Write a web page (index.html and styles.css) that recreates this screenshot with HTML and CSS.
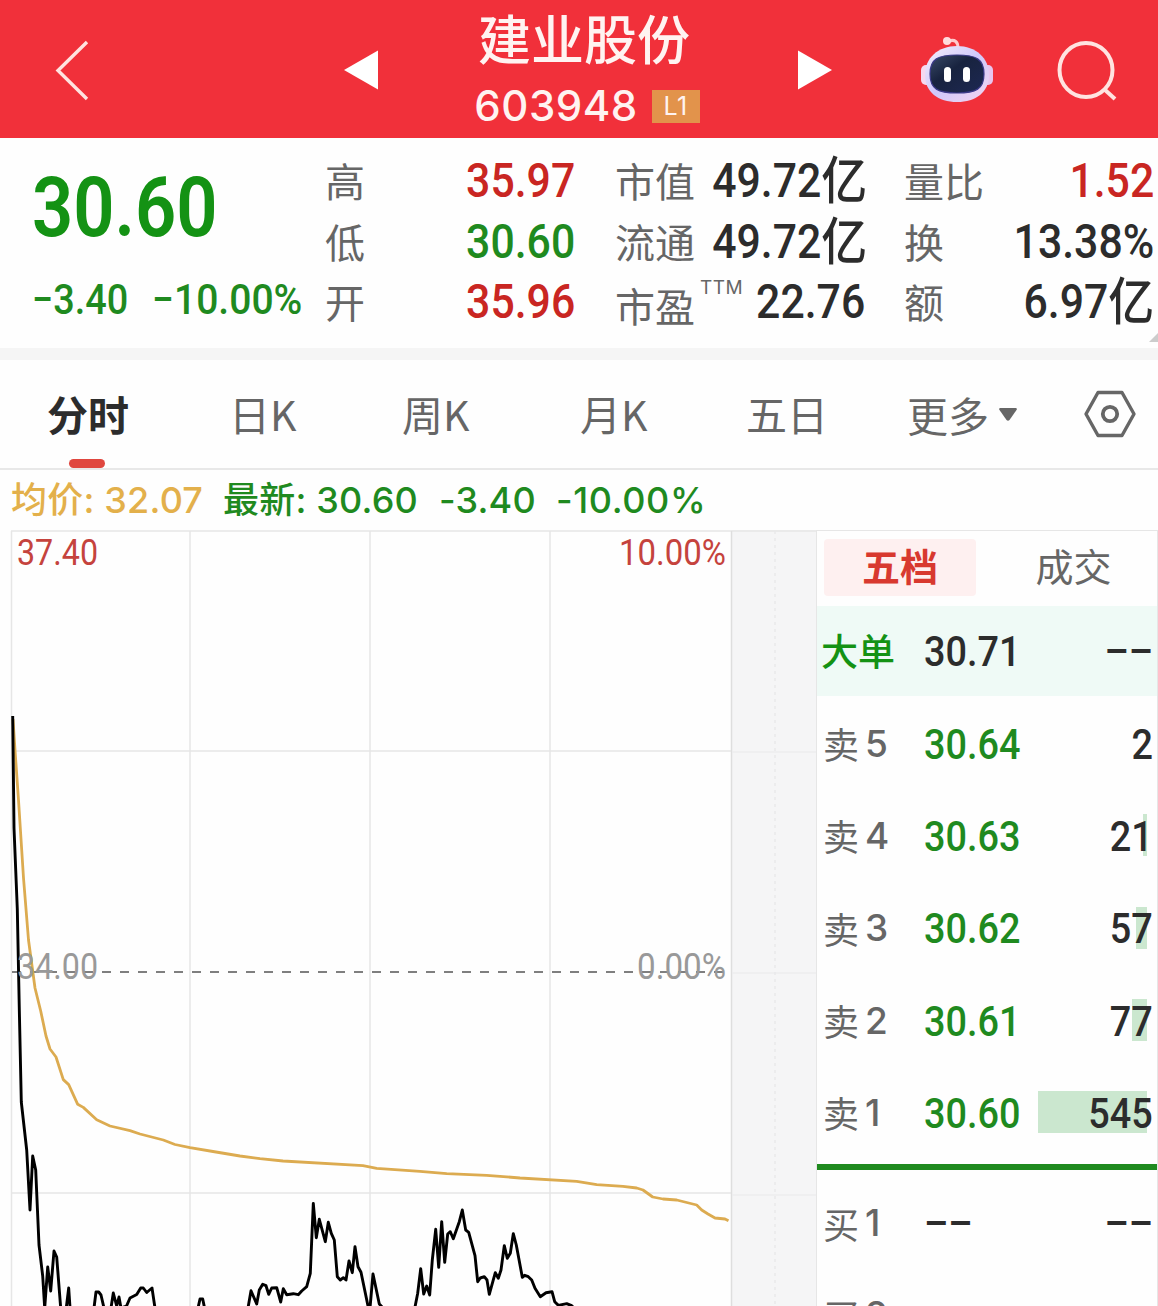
FILE: index.html
```html
<!DOCTYPE html>
<html lang="zh-CN">
<head>
  <meta charset="UTF-8">
  <meta name="viewport" content="width=device-width, initial-scale=1.0">
  <title>建业股份 603948</title>
  <link rel="stylesheet" href="styles.css">
</head>
<body>
  <header class="header">
    <svg class="back" width="40" height="64" viewBox="0 0 40 64"><path d="M34 4L5 32.500L34 61" fill="none" stroke="#ffe3e0" stroke-width="3.400"/></svg>
    <svg class="prev" width="34" height="40" viewBox="0 0 34 40"><path d="M34 0.500V39.500L0 20Z" fill="#fff"/></svg>
    <div class="stock">
      <h1>建业股份</h1>
      <div class="code"><span>603948</span><span class="level">L1</span></div>
    </div>
    <svg class="next" width="34" height="40" viewBox="0 0 34 40"><path d="M0 0.500V39.500L34 20Z" fill="#fff"/></svg>
    <svg class="robot" width="74" height="70" viewBox="0 0 74 70">
      <defs>
        <linearGradient id="shell" x1="0" y1="0" x2="1" y2="1">
          <stop offset="0" stop-color="#f6effc"/>
          <stop offset="0.5" stop-color="#cfc8fa"/>
          <stop offset="1" stop-color="#f5d5ef"/>
        </linearGradient>
        <linearGradient id="face" x1="0" y1="0" x2="1" y2="1">
          <stop offset="0" stop-color="#3a4a68"/>
          <stop offset="0.4" stop-color="#18233f"/>
          <stop offset="1" stop-color="#1d2853"/>
        </linearGradient>
      </defs>
      <path d="M29 7C35 5 38 8 38 14" fill="none" stroke="#ffc9cc" stroke-width="3"/>
      <circle cx="27" cy="7" r="4" fill="#ffdbdd"/>
      <rect x="1" y="31" width="12" height="20" rx="5" fill="#f6d9ef"/>
      <rect x="61" y="31" width="12" height="20" rx="5" fill="#e8c5ee"/>
      <path d="M37 12C56 12 69 24 69 41C69 58 56 68 37 68C18 68 5 58 5 41C5 24 18 12 37 12Z" fill="url(#shell)"/>
      <path d="M37 21C56 21 64 25 64 40C64 55 56 59 37 59C18 59 10 55 10 40C10 25 18 21 37 21Z" fill="url(#face)" stroke="#3b3a88" stroke-width="1.200"/>
      <rect x="24" y="33" width="7" height="15" rx="3.500" fill="#fff"/>
      <rect x="43" y="33" width="7" height="15" rx="3.500" fill="#fff"/>
    </svg>
    <svg class="search" width="62" height="62" viewBox="0 0 62 62"><ellipse cx="29" cy="29" rx="26.500" ry="27" fill="none" stroke="#ffe3e0" stroke-width="4"/><path d="M47 48L58 58" stroke="#ffe3e0" stroke-width="4"/></svg>
  </header>

  <section class="quote">
    <div class="current">
      <div class="price num">30.60</div>
      <div class="change"><span class="num">−3.40</span><span class="num">−10.00%</span></div>
    </div>
    <dl class="stats">
      <div><dt>高</dt><dd class="num red">35.97</dd></div>
      <div><dt>低</dt><dd class="num green">30.60</dd></div>
      <div><dt>开</dt><dd class="num red">35.96</dd></div>
    </dl>
    <dl class="stats">
      <div><dt>市值</dt><dd class="num">49.72<i>亿</i></dd></div>
      <div><dt>流通</dt><dd class="num">49.72<i>亿</i></dd></div>
      <div><dt class="pe">市盈<sup>TTM</sup></dt><dd class="num">22.76</dd></div>
    </dl>
    <dl class="stats last">
      <div><dt>量比</dt><dd class="num red">1.52</dd></div>
      <div><dt>换</dt><dd class="num">13.38%</dd></div>
      <div><dt>额</dt><dd class="num">6.97<i>亿</i></dd></div>
    </dl>
    <span class="corner"></span>
  </section>

  <nav class="tabs">
    <span class="tab active">分时</span>
    <span class="tab">日K</span>
    <span class="tab">周K</span>
    <span class="tab">月K</span>
    <span class="tab">五日</span>
    <span class="tab more">更多<svg width="18" height="13" viewBox="0 0 18 13"><path d="M1 0H17Q18.500 0.500 17.500 2L10.500 12Q9 13.500 7.500 12L0.500 2Q-0.500 0.500 1 0Z" fill="#666"/></svg></span>
    <svg class="setting" width="52" height="48" viewBox="0 0 52 48"><path d="M14 2.500H38L50 24L38 45.500H14L2 24Z" fill="none" stroke="#666" stroke-width="3.400" stroke-linejoin="round"/><circle cx="26" cy="24" r="7.200" fill="none" stroke="#666" stroke-width="3.800"/></svg>
  </nav>

  <div class="summary">
    <span class="avg"><b>均价:</b> 32.07</span>
    <span class="latest"><b>最新:</b> 30.60</span>
    <span class="diff">-3.40</span>
    <span class="rate">-10.00%</span>
  </div>

  <main class="main">
    <svg class="chart" width="816" height="776" viewBox="0 530 816 776">
      <rect x="731" y="530" width="85" height="776" fill="#f5f5f6"/>
      <g stroke="#e6e6e6" stroke-width="1.500">
        <path d="M11 531H816M11.500 531V1306M190 531V1306M370 531V1306M550 531V1306M11 751H731M11 1193H731"/>
        <path d="M731.500 531V1306" stroke="#dedede"/>
        <path d="M732 752H816M732 973H816M732 1195H816" stroke="#ededee"/>
        <path d="M775 531V1306" stroke="#e9e9ea" stroke-dasharray="3 4"/>
      </g>
      <path d="M12 972H726" stroke="#555" stroke-width="1.500" stroke-dasharray="9 9"/>
      <text class="axis up" x="17" y="565" textLength="81" lengthAdjust="spacingAndGlyphs">37.40</text>
      <text class="axis up" x="619" y="565" textLength="107" lengthAdjust="spacingAndGlyphs">10.00%</text>
      <!-- average line -->
      <polyline class="avg-line" points="13,719 15,750 18.500,800 23.500,878 28.500,940 35,988 40.700,1011 46,1036 50,1049 56,1057 63.300,1079.600 68.700,1084.600 77.700,1104.300 83.300,1107.400 96.700,1119.800 110,1126 130,1130.600 140,1134 163.300,1140 175,1144.500 190,1147.600 213,1151.500 240,1156 260,1158.700 283,1161 363,1165.700 376.700,1168.300 420,1171.300 446.700,1173.700 486.700,1175.300 520,1178 576.700,1181.300 596.700,1184.700 623,1186.300 636.700,1188 643,1190 652.700,1197 663,1199 676.700,1200 696.700,1205 701.700,1210 708,1214 715,1218 725,1219 728.500,1220.700"/>
      <!-- price line -->
      <polyline class="price-line" points="12.700,716 14,828 17.300,909 19.300,1009 21.300,1102 26.700,1150 30,1210 32.700,1156 35.700,1170 39,1245 42.700,1276 44.700,1308 47.700,1267 50.700,1291 54,1251 56.700,1257 60.700,1308 64,1315 66,1310 68.700,1288 70.300,1312 82,1320 94,1308 96,1292 98.700,1292 101,1295 104,1308 107,1315 111,1308 113.300,1293 116.700,1306 119,1297 121,1308 126.500,1306 130,1298 136.700,1294.500 140.700,1288 143.300,1288 146.700,1292.500 152,1288 155.300,1310 180,1322 198,1308 200,1299 202.700,1299 205,1310 225,1325 248,1308 251,1290.700 256.700,1304 259.300,1290 262.700,1284.300 266,1285.700 268.700,1294.300 271.700,1288 276.700,1287.700 280.700,1302 283.300,1288.700 286.700,1294.700 293.300,1293.700 298.300,1294.700 301.700,1291 306.700,1286.700 310.300,1273.300 313.300,1203.500 316.300,1237.700 319.300,1219.300 325.300,1241.700 328.300,1222.300 331.300,1233.300 334.300,1240 337.300,1276.700 340.300,1280 343.300,1277.700 346,1280 349,1261 352.300,1272.700 355,1246.700 358,1266.700 361,1272.300 368,1306 370,1308 373,1274 379.300,1304 384,1309 400,1325 415,1307 417.700,1293.300 420.700,1268.700 423.700,1294 426.700,1286 429.700,1295 432.300,1260 435.700,1229.300 438.700,1267.300 441.700,1221.700 444.700,1262.300 447.700,1234 450.300,1231.700 453.300,1238.700 459.300,1221.700 462.300,1210 465.700,1230 468.700,1232.300 475,1255.700 477.700,1281.700 480.300,1278 484.300,1276.700 487,1280 489.300,1294.300 495.300,1272.700 498.300,1278.300 501,1270 504.300,1245.700 507.300,1258.300 510.300,1253.300 513.300,1233.700 516.300,1245 522.300,1277.300 524.700,1275.300 528.300,1276.700 531.700,1280 535,1288.300 540.300,1296.700 546,1292.700 552,1291.700 554.700,1301.700 558.300,1305.300 566.700,1303.700 571.700,1305.700 580,1314"/>
      <text class="axis" x="17" y="979" textLength="81" lengthAdjust="spacingAndGlyphs">34.00</text>
      <text class="axis" x="637" y="979" textLength="89" lengthAdjust="spacingAndGlyphs">0.00%</text>
    </svg>

    <aside class="book">
      <div class="switch"><span class="on">五档</span><span>成交</span></div>
      <div class="row big"><span class="side">大单</span><span class="bid num">30.71</span><span class="vol num">––</span></div>
      <div class="row"><span class="side">卖<em>5</em></span><span class="bid num green">30.64</span><span class="vol num">2</span></div>
      <div class="row"><span class="side">卖<em>4</em></span><span class="bid num green">30.63</span><span class="bar" style="width: 4px"></span><span class="vol num">21</span></div>
      <div class="row"><span class="side">卖<em>3</em></span><span class="bid num green">30.62</span><span class="bar" style="width: 11px"></span><span class="vol num">57</span></div>
      <div class="row"><span class="side">卖<em>2</em></span><span class="bid num green">30.61</span><span class="bar" style="width: 15px"></span><span class="vol num">77</span></div>
      <div class="row"><span class="side">卖<em>1</em></span><span class="bid num green">30.60</span><span class="bar" style="width: 109px"></span><span class="vol num">545</span></div>
      <div class="divider"></div>
      <div class="row"><span class="side">买<em>1</em></span><span class="bid num">––</span><span class="vol num">––</span></div>
      <div class="row"><span class="side">买<em>2</em></span></div>
    </aside>
  </main>
</body>
</html>
```
FILE: styles.css
```css
* {
  box-sizing: border-box;
}

body {
  margin: 0;
  width: 1158px;
  height: 1306px;
  overflow: hidden;
  background: #fefefe;
  color: #2c2c2c;
  font-family: Inter, "Noto Sans CJK SC", sans-serif;
}

h1, dl, dd {
  margin: 0;
}

svg {
  display: block;
  flex: none;
}

/* narrow figures used for every quote value */
.num {
  font-family: Roboto, "Noto Sans CJK SC", sans-serif;
  font-weight: 500;
  transform: scaleX(0.9);
  transform-origin: left center;
  white-space: nowrap;
}

.red {
  color: #c92622;
}

.green {
  color: #1f8a1f;
}

/* header */
.header {
  display: flex;
  align-items: flex-start;
  height: 138px;
  background: #f1303a;
  color: #fff3f1;
}

.back {
  margin: 38px 0 0 53px;
}

.prev {
  margin: 50px 0 0 251px;
}

.stock {
  width: 420px;
  padding-right: 8px;
  text-align: center;
}

.stock h1 {
  margin-top: 10px;
  font-size: 53px;
  line-height: 62px;
  font-weight: 500;
}

.code {
  display: flex;
  justify-content: center;
  align-items: center;
  margin: 11px -6px 0 0;
  font-size: 42px;
  line-height: 46px;
  height: 46px;
  font-weight: 500;
  letter-spacing: 0.500px;
}

.level {
  width: 48px;
  height: 33px;
  margin-left: 14px;
  background: #e2934b;
  font-size: 25px;
  line-height: 33px;
  font-weight: 400;
}

.next {
  margin-top: 50px;
}

.robot {
  margin: 34px 0 0 88px;
}

.search {
  margin: 41px 0 0 63px;
}

/* quote */
.quote {
  display: flex;
  position: relative;
  height: 222px;
  padding-top: 13px;
  border-bottom: 12px solid #f5f5f5;
}

.current {
  width: 325px;
  padding-left: 32px;
  color: #149214;
}

.price {
  margin-top: 12px;
  font-size: 84px;
  line-height: 90px;
  font-weight: 600;
  transform: scaleX(0.86);
}

.change {
  display: flex;
  gap: 13px;
  margin-top: 23px;
  font-size: 42px;
  line-height: 48px;
  color: #1f8a1f;
}

.change .num:last-child {
  transform: scaleX(0.93);
}

.stats {
  width: 250px;
  margin-right: 40px;
}

.stats.last {
  margin: 0 0 0 -1px;
}

.stats div {
  display: flex;
  justify-content: space-between;
  height: 60.500px;
  line-height: 61px;
}

.stats dt {
  padding-top: 1px;
  font-size: 40px;
  color: #666;
  white-space: nowrap;
}

.stats dd {
  font-size: 47.500px;
  transform-origin: right center;
}

.stats i {
  font-style: normal;
  font-size: 51px;
  line-height: 1;
  vertical-align: -2px;
}

.stats .pe {
  position: relative;
  padding-top: 5px;
}

.stats sup {
  position: absolute;
  left: 85px;
  top: -15px;
  font-size: 19px;
  letter-spacing: 0.500px;
}

.corner {
  position: absolute;
  right: 0;
  bottom: 6px;
  border-left: 9px solid transparent;
  border-bottom: 9px solid #ccc;
}

/* tabs */
.tabs {
  display: flex;
  height: 110px;
  padding-left: 47px;
  border-bottom: 2px solid #e8e8e8;
  font-size: 41px;
  line-height: 107px;
  color: #666;
}

.tab {
  position: relative;
  width: 182px;
  font-family: "Noto Sans CJK SC", sans-serif;
  font-weight: 400;
}

.tab:nth-child(2) {
  width: 173px;
}

.tab:nth-child(3) {
  width: 178px;
}

.tab:nth-child(4) {
  width: 166px;
}

.tab:nth-child(5) {
  width: 161px;
}

.tab.active {
  color: #2c2c2c;
  font-weight: 700;
}

.tab.active::after {
  content: "";
  position: absolute;
  left: 22px;
  bottom: 0;
  width: 36px;
  height: 9px;
  border-radius: 5px;
  background: #e0473f;
}

.tab.more {
  display: flex;
  align-items: center;
  gap: 10px;
  width: 177px;
}

.setting {
  margin-top: 30px;
}

/* summary line */
.summary {
  display: flex;
  height: 60px;
  padding-left: 11px;
  font-size: 36px;
  line-height: 60px;
  font-weight: 500;
  letter-spacing: 0.200px;
  color: #1f8a1f;
  white-space: nowrap;
}

.summary b {
  font-weight: 500;
}

.summary .avg {
  width: 212px;
  color: #e3b04b;
}

.summary .latest {
  width: 216px;
}

.summary .diff {
  width: 117px;
}

.summary .rate {
  letter-spacing: 0.600px;
}

/* chart */
.main {
  display: flex;
}

.axis {
  font-family: Roboto, sans-serif;
  font-size: 36px;
  fill: #999;
}

.axis.up {
  fill: #c5433d;
}

.avg-line {
  fill: none;
  stroke: #dcab50;
  stroke-width: 2.800;
  stroke-linejoin: round;
}

.price-line {
  fill: none;
  stroke: #000;
  stroke-width: 2.900;
  stroke-linejoin: round;
}

/* order book */
.book {
  width: 342px;
  height: 776px;
  overflow: hidden;
  border: 1px solid #e6e6e6;
  border-bottom: 0;
}

.switch {
  display: flex;
  height: 75px;
  padding: 8px 0 0 7px;
  font-size: 38px;
  line-height: 56px;
  color: #666;
}

.switch span {
  flex: none;
  width: 173px;
  text-align: center;
}

.switch .on {
  width: 152px;
  height: 57px;
  margin-right: 11px;
  border-radius: 4px;
  background: #fef0f0;
  color: #d8392f;
  font-weight: 700;
}

.row {
  display: flex;
  position: relative;
  align-items: center;
  height: 92.300px;
  padding: 0 4px 0 6px;
}

.row.big {
  height: 90px;
  margin-bottom: 2px;
  padding-left: 4px;
  background: #effaf6;
}

.side {
  display: flex;
  align-items: center;
  width: 101px;
  padding-bottom: 2px;
  font-size: 36px;
  color: #666;
}

.big .side {
  width: 103px;
  font-size: 37px;
  font-weight: 500;
  color: #149214;
}

.side em {
  margin-left: 6px;
  font-size: 37px;
  font-style: normal;
  font-weight: 500;
}

.bid,
.vol {
  font-size: 42px;
}

.vol {
  position: relative;
  margin-left: auto;
  transform-origin: right center;
}

.bar {
  position: absolute;
  right: 10px;
  top: 24px;
  height: 42px;
  background: #cbe7cf;
}

.divider {
  height: 6px;
  margin: 5px 0 7px;
  background: #1f8a1f;
}
```
